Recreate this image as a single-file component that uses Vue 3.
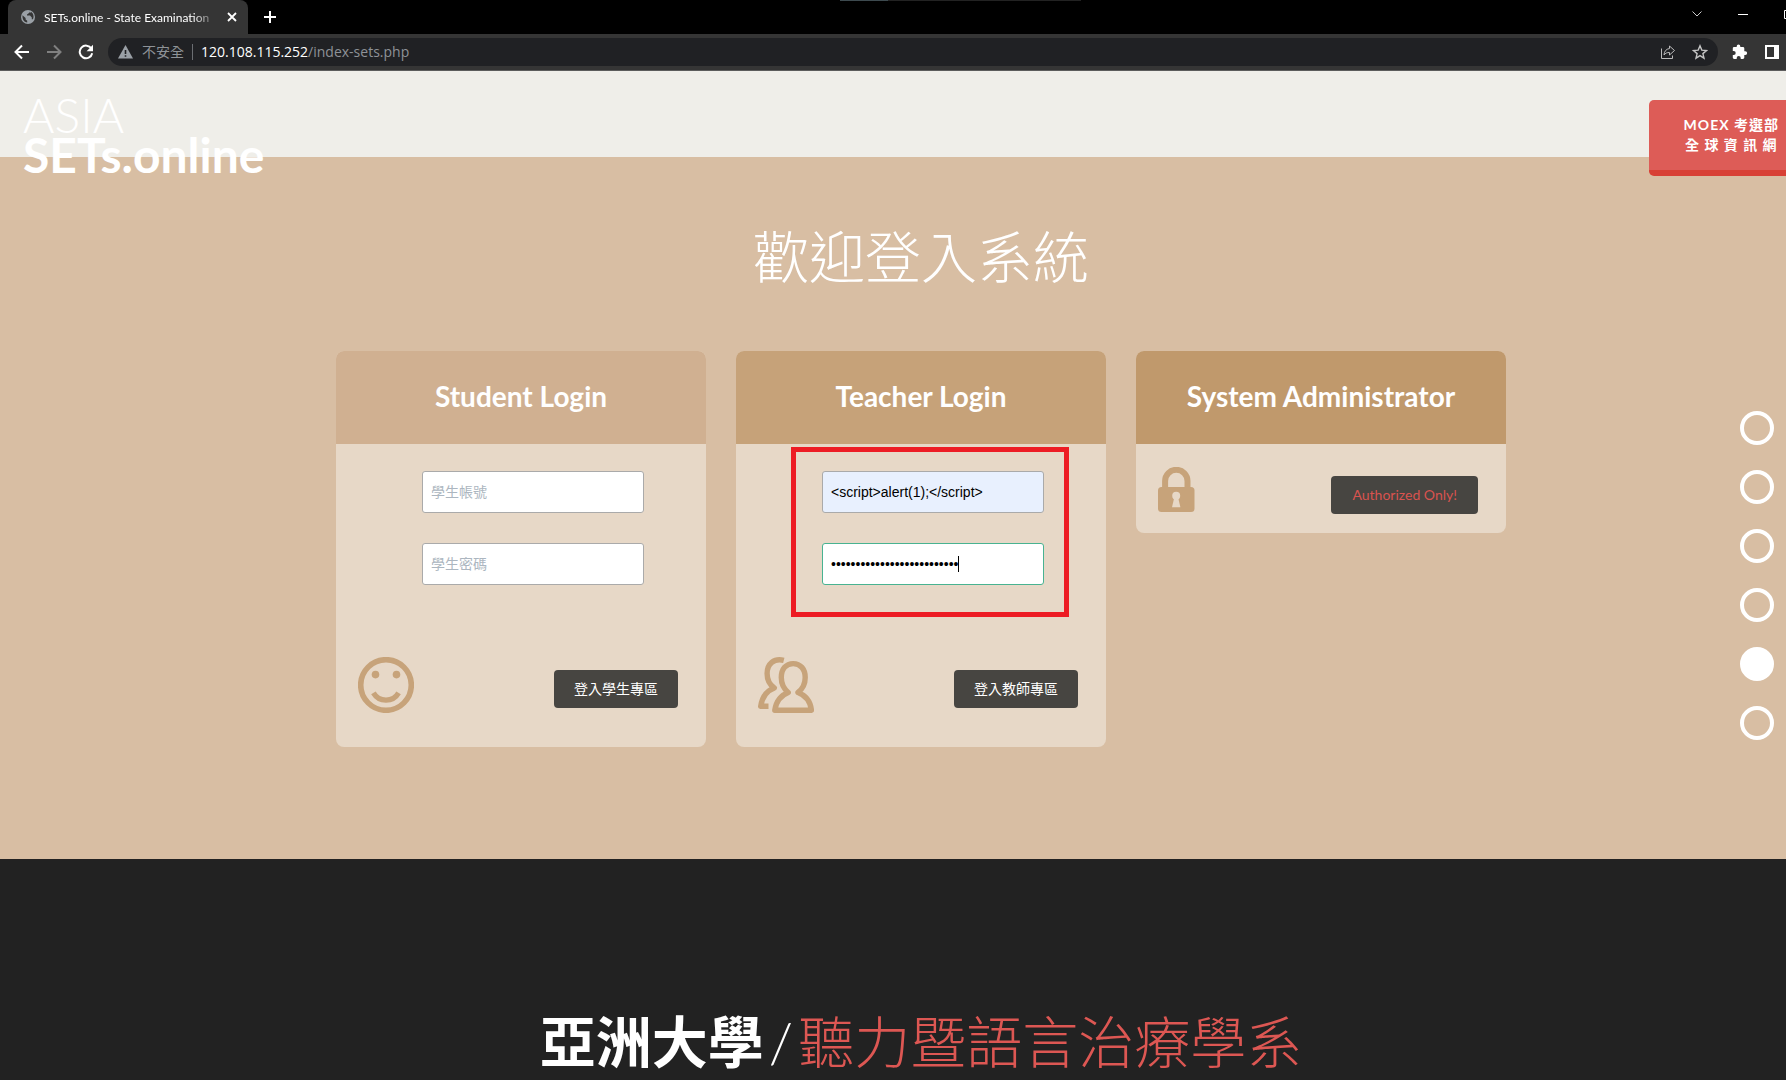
<template>
  <div class="window">
    <header class="chrome">
      <div class="tab-strip">
        <div class="tab">
          <svg class="globe" viewBox="0 0 14 14" aria-hidden="true">
            <circle cx="7" cy="7" r="7" fill="#9aa0a6" />
            <path d="M1.5 5.2L4.6 8v1.6l1.6 1.2v1.8C3 12 1.2 9.400 1.500 5.200zM8 1.500v1.600L6 4.400v1.200h3l1.800 2v1.700h1.100C13 7 12.800 3.400 10.200 1.900L8.800 3z" fill="#353535" />
          </svg>
          <span class="tab-title">SETs.online - State Examination</span>
          <button type="button" class="icon-btn" aria-label="關閉分頁">
            <svg width="10" height="10" viewBox="0 0 10 10"><path d="M1 1l8 8M9 1l-8 8" stroke="#fff" stroke-width="1.8" /></svg>
          </button>
        </div>
        <button type="button" class="icon-btn new-tab" aria-label="新增分頁">
          <svg width="12" height="12" viewBox="0 0 12 12"><path d="M6 0v12M0 6h12" stroke="#fff" stroke-width="2" /></svg>
        </button>
        <div class="window-controls">
          <button type="button" class="icon-btn" aria-label="搜尋分頁">
            <svg width="10" height="6" viewBox="0 0 10 6"><path d="M.5 .5L5 5L9.500 .5" fill="none" stroke="#ccc" /></svg>
          </button>
          <button type="button" class="icon-btn" aria-label="最小化">
            <svg width="10" height="2" viewBox="0 0 10 2"><path d="M0 1h10" stroke="#fff" stroke-width="1" shape-rendering="crispEdges" /></svg>
          </button>
          <button type="button" class="icon-btn" aria-label="最大化">
            <svg width="10" height="10" viewBox="0 0 10 10"><path d="M.5 1.500h9v8h-9z" fill="none" stroke="#fff" /></svg>
          </button>
        </div>
        <div class="top-mark"></div>
      </div>

      <div class="toolbar">
        <button type="button" class="icon-btn" aria-label="上一頁">
          <svg width="16" height="16" viewBox="0 0 16 16"><path d="M15 8H2M8 1.500L1.500 8L8 14.500" fill="none" stroke="#fff" stroke-width="2" /></svg>
        </button>
        <button type="button" class="icon-btn" aria-label="下一頁">
          <svg width="16" height="16" viewBox="0 0 16 16"><path d="M1 8h13M8 1.500L14.500 8L8 14.500" fill="none" stroke="#808080" stroke-width="2" /></svg>
        </button>
        <button type="button" class="icon-btn" aria-label="重新載入">
          <svg width="16" height="16" viewBox="0 0 16 16">
            <path d="M13.400 4.600A6.300 6.300 0 1 0 14.200 9.200" fill="none" stroke="#fff" stroke-width="2" />
            <path d="M15 .8v6.400H8.600z" fill="#fff" />
          </svg>
        </button>
        <div class="omnibox">
          <svg width="15" height="14" viewBox="0 0 15 14" aria-hidden="true">
            <path d="M7.500 0L15 13.500H0z" fill="#9aa0a6" />
            <path d="M7.500 5v4M7.500 10.200v1.600" stroke="#202124" stroke-width="1.600" />
          </svg>
          <span class="insecure">不安全</span>
          <span class="url"><b>120.108.115.252</b>/index-sets.php</span>
          <button type="button" class="icon-btn share" aria-label="分享">
            <svg width="16" height="16" viewBox="0 0 16 16" fill="none" stroke="#bbb">
              <path d="M1.500 4.500v10h11v-3" />
              <path d="M9.500 2l5 4.500l-5 4.500V8.500C7 8.400 5.300 9.200 4 11C4.200 7.500 6 5 9.500 4.500z" stroke-linejoin="round" />
            </svg>
          </button>
          <button type="button" class="icon-btn" aria-label="加入書籤">
            <svg width="16" height="16" viewBox="0 0 16 16"><path d="M8 1.800l1.800 4.300l4.700.4l-3.600 3.100l1.100 4.600L8 11.700l-4 2.500l1.100-4.600L1.500 6.500l4.700-.4z" fill="none" stroke="#c4c4c4" stroke-width="1.400" /></svg>
          </button>
        </div>
        <button type="button" class="icon-btn" aria-label="擴充功能">
          <svg width="16" height="16" viewBox="0 0 16 16"><path d="M13.300 7.200h-1V4.500c0-.8-.6-1.400-1.400-1.400H8.300V2.300a1.800 1.800 0 0 0-3.600 0v.8H2.100C1.300 3.100.8 3.700.8 4.500V7h.9a2 2 0 0 1 0 4H.8v2.600c0 .8.600 1.400 1.400 1.400h2.500v-1a2 2 0 0 1 4 0v1h2.200c.8 0 1.400-.6 1.400-1.400v-2.700h1a1.850 1.850 0 0 0 0-3.700z" fill="#fff" /></svg>
        </button>
        <button type="button" class="icon-btn" aria-label="側邊面板">
          <svg width="14" height="14" viewBox="0 0 14 14"><path d="M0 0h14v14H0zM2 2v10h7V2z" fill="#fff" fill-rule="evenodd" /></svg>
        </button>
      </div>
    </header>

    <div class="page">
      <div class="site-header">
        <h1 class="logo"><span>ASIA</span>SETs.online</h1>
        <a class="moex" href="#moex"><span>MOEX 考選部</span><span>全 球 資 訊 網</span></a>
      </div>

      <nav class="dots" aria-label="頁面區段">
        <a v-for="n in 6" :key="n" :href="'#section' + n" :class="{ active: n === 5 }" :aria-label="'第 ' + n + ' 區'"></a>
      </nav>

      <section class="intro"></section>

      <section class="login">
        <h2>歡迎登入系統</h2>
        <div class="cards">
          <form v-for="card in cards" :key="card.id" :class="['card', card.id]" @submit.prevent>
            <h3>{{ card.title }}</h3>
            <div class="card-body">
              <div v-if="card.fields" class="fields">
                <div v-for="field in card.fields" :key="field.label" class="field">
                  <input
                    v-model="field.value"
                    :type="field.type"
                    :placeholder="field.label"
                    :aria-label="field.label"
                    :class="{ autofilled: field.autofilled, editing: field.editing }"
                  />
                  <i v-if="field.editing" class="caret"></i>
                </div>
              </div>
              <div class="card-footer">
                <svg v-if="card.id === 'student'" width="56" height="56" viewBox="0 0 56 56" aria-hidden="true">
                  <circle cx="28" cy="28" r="25.300" fill="none" stroke="#c7a37a" stroke-width="5.600" />
                  <circle cx="17.500" cy="17.600" r="3.800" fill="#c7a37a" />
                  <circle cx="38.500" cy="17.600" r="3.800" fill="#c7a37a" />
                  <path d="M15.400 35.900A14.600 14.600 0 0 0 40.600 35.900" fill="none" stroke="#c7a37a" stroke-width="5.200" />
                </svg>
                <svg v-else-if="card.id === 'teacher'" width="56" height="56" viewBox="0 0 56 56" fill="none" stroke="#c7a37a" stroke-width="5.400" stroke-linejoin="round" aria-hidden="true">
                  <path d="M30.300 35.500C26 32 23.300 27 23.300 20.500C23.300 12 28 6.600 35.200 6.600S47.200 12 47.200 20.500C47.200 27 44.500 32 40 35.500C48 38.500 52.500 45 53.400 53.200H16.800C18 45 22.500 38.500 30.300 35.500Z" />
                  <path d="M25.800 3.300C16 .8 9.100 7 9.100 16.500C9.100 24 12 28 16.300 31C8 34 4 41 2.700 49.300H10.500" />
                </svg>
                <svg v-else width="37" height="45" viewBox="0 0 37 45" aria-hidden="true">
                  <path d="M7.100 22V14a11.200 11.200 0 0 1 22.400 0v8" fill="none" stroke="#c7a37a" stroke-width="6" />
                  <rect y="20" width="36.500" height="25" rx="3.500" fill="#c7a37a" />
                  <circle cx="18.200" cy="28.700" r="4" fill="#e7d8c7" />
                  <path d="M16.400 30h3.600l2.400 10.300h-8.400z" fill="#e7d8c7" />
                </svg>
                <button type="submit">{{ card.action }}</button>
              </div>
              <div v-if="card.id === 'teacher'" class="highlight"></div>
            </div>
          </form>
        </div>
      </section>

      <section class="about">
        <h2><strong>亞洲大學</strong><i>/</i><span>聽力暨語言治療學系</span></h2>
      </section>
    </div>
  </div>
</template>

<script setup>
import { ref } from 'vue';

const payload = '<script>alert(1);<\/script>';

const cards = ref([
  {
    id: 'student',
    title: 'Student Login',
    action: '登入學生專區',
    fields: [
      { label: '學生帳號', type: 'text', value: '' },
      { label: '學生密碼', type: 'password', value: '' },
    ],
  },
  {
    id: 'teacher',
    title: 'Teacher Login',
    action: '登入教師專區',
    fields: [
      { label: '教師帳號', type: 'text', value: payload, autofilled: true },
      { label: '教師密碼', type: 'password', value: payload, editing: true },
    ],
  },
  { id: 'admin', title: 'System Administrator', action: 'Authorized Only!' },
]);
</script>

<style>
body {
  background: #222;
}
</style>

<style scoped>
.window {
  display: flex;
  flex-direction: column;
  min-height: 100vh;
  overflow: hidden;
  font-family: Lato, "Noto Sans CJK TC", sans-serif;
}

.window *,
.window {
  box-sizing: border-box;
}

h1,
h2,
h3 {
  margin: 0;
}

/* Barra del navegador */
.chrome {
  color: #fff;
  background: #353535;
  border-bottom: 1px solid #5c5c5c;
  font-family: "Open Sans", "Noto Sans CJK TC", sans-serif;
}

.tab-strip {
  position: relative;
  display: flex;
  height: 34px;
  background: #000;
}

.tab {
  display: flex;
  align-items: center;
  width: 240px;
  margin-left: 8px;
  padding: 0 11px 0 13px;
  background: #353535;
  border-radius: 8px 8px 0 0;
}

.globe {
  width: 14px;
  height: 14px;
  margin-right: 9px;
  flex: none;
}

.tab-title {
  flex: 1;
  overflow: hidden;
  white-space: nowrap;
  font-family: Lato, sans-serif;
  font-size: 12px;
  mask-image: linear-gradient(90deg, #000 85%, transparent);
}

.icon-btn {
  display: flex;
  align-items: center;
  justify-content: center;
  flex: none;
  padding: 0;
  border: 0;
  background: none;
}

.tab .icon-btn {
  margin-left: 9px;
}

.new-tab {
  margin-left: 16px;
}

.window-controls {
  display: flex;
  gap: 36px;
  margin-left: auto;
  margin-right: -8px;
  padding-bottom: 6px;
}

.top-mark {
  position: absolute;
  top: 0;
  left: 840px;
  width: 241px;
  height: 1px;
  background: linear-gradient(90deg, #3d4a4f 20%, #222 20%);
}

.toolbar {
  display: flex;
  align-items: center;
  gap: 16px;
  height: 36px;
  padding: 0 6px 0 14px;
}

.toolbar > .icon-btn {
  width: 16px;
}

.omnibox {
  display: flex;
  align-items: center;
  flex: 1;
  height: 28px;
  margin-left: -2px;
  margin-right: -2px;
  padding: 0 10px;
  border-radius: 14px;
  background: #202124;
  font-size: 14px;
  color: #8e9297;
}

.insecure {
  margin: 0 8px 0 9px;
  line-height: 16px;
  padding-right: 8px;
  border-right: 1px solid #6b6e72;
}

.url {
  padding-bottom: 2px;
}

.url b {
  font-weight: 400;
  color: #fff;
}

.share {
  margin-left: auto;
  margin-right: 16px;
}

/* Sitio */
.page {
  position: relative;
  display: flex;
  flex-direction: column;
  flex: 1;
}

.site-header {
  position: absolute;
  top: 0;
  left: 23px;
  right: -28px;
  display: flex;
  justify-content: space-between;
  align-items: flex-start;
}

.logo {
  display: flex;
  flex-direction: column;
  margin-top: 24px;
  font-size: 48px;
  line-height: 40px;
  font-weight: 700;
  color: #fff;
}

.logo span {
  font-weight: 300;
}

.moex {
  display: flex;
  flex-direction: column;
  margin-top: 29px;
  padding: 15px 35px;
  border-radius: 5px;
  border-bottom: 6px solid #d84035;
  background: #dd5c57;
  color: #fff;
  font-size: 14px;
  line-height: 20px;
  font-weight: 700;
  letter-spacing: 1px;
  text-align: center;
  text-decoration: none;
}

.dots {
  position: absolute;
  top: 340px;
  right: 12px;
  display: flex;
  flex-direction: column;
  gap: 25px;
}

.dots a {
  width: 34px;
  height: 34px;
  border: 4px solid #fff;
  border-radius: 50%;
}

.dots a.active {
  background: #fff;
}

.intro {
  height: 86px;
  background: #efeee9;
}

.login {
  padding: 68px 0 112px 56px;
  background: #d8bea3;
}

.login h2,
.about h2 {
  font-size: 56px;
  line-height: 64px;
  font-weight: 300;
  color: #fff;
  text-align: center;
}

.cards {
  display: flex;
  align-items: flex-start;
  gap: 30px;
  max-width: 1170px;
  margin: 62px auto 0;
}

.card {
  flex: 1;
  border-radius: 8px;
  background: #e7d8c7;
}

.card h3 {
  border-radius: 8px 8px 0 0;
  padding-bottom: 2px;
  font-size: 28px;
  line-height: 91px;
  font-weight: 700;
  color: #fff;
  text-align: center;
}

.student h3 {
  background: #d0b091;
}

.teacher h3 {
  background: #c6a279;
}

.admin h3 {
  background: #c0996c;
}

.card-body {
  position: relative;
  padding: 27px 28px 34px 22px;
}

.admin .card-body {
  padding: 23px 28px 19px 22px;
}

.fields {
  display: flex;
  flex-direction: column;
  gap: 30px;
  width: 222px;
  margin: 0 auto 72px 64px;
}

.field {
  position: relative;
}

.field input {
  display: block;
  width: 100%;
  height: 42px;
  padding: 0 8px;
  border: 1px solid #aaa;
  border-radius: 3px;
  outline: none;
  background: #fff;
  color: #000;
  font: 14px "Liberation Sans", "Noto Sans CJK TC", sans-serif;
}

.field input::placeholder {
  color: #acb6c0;
}

.field input.autofilled {
  background: #e8f0fe;
}

.field input.editing {
  border-color: #48b391;
}

.caret {
  position: absolute;
  top: 13px;
  left: 136px;
  width: 1px;
  height: 16px;
  background: #000;
}

.card-footer {
  display: flex;
  align-items: center;
  justify-content: space-between;
}

.card-footer button {
  height: 38px;
  margin-top: 7px;
  padding: 0 20px 2px;
  border: 0;
  border-radius: 4px;
  background: #474541;
  color: #fff;
  font: 14px Lato, "Noto Sans CJK TC", sans-serif;
}

.admin .card-footer {
  align-items: flex-start;
}

.admin .card-footer button {
  margin-top: 9px;
  padding: 0 21px 2px;
  color: #d9534f;
}

/* Marco rojo sobre los campos del profesor */
.highlight {
  position: absolute;
  top: 3px;
  left: 55px;
  width: 278px;
  height: 170px;
  border: 5px solid #ed1c24;
  pointer-events: none;
}

.about {
  flex: 1;
  padding: 151px 0 0 56px;
  background: #222;
}

.about strong {
  font-weight: 700;
}

.about i {
  padding: 0 5px;
  font-style: normal;
}

.about h2 span {
  color: #dd5753;
}
</style>
